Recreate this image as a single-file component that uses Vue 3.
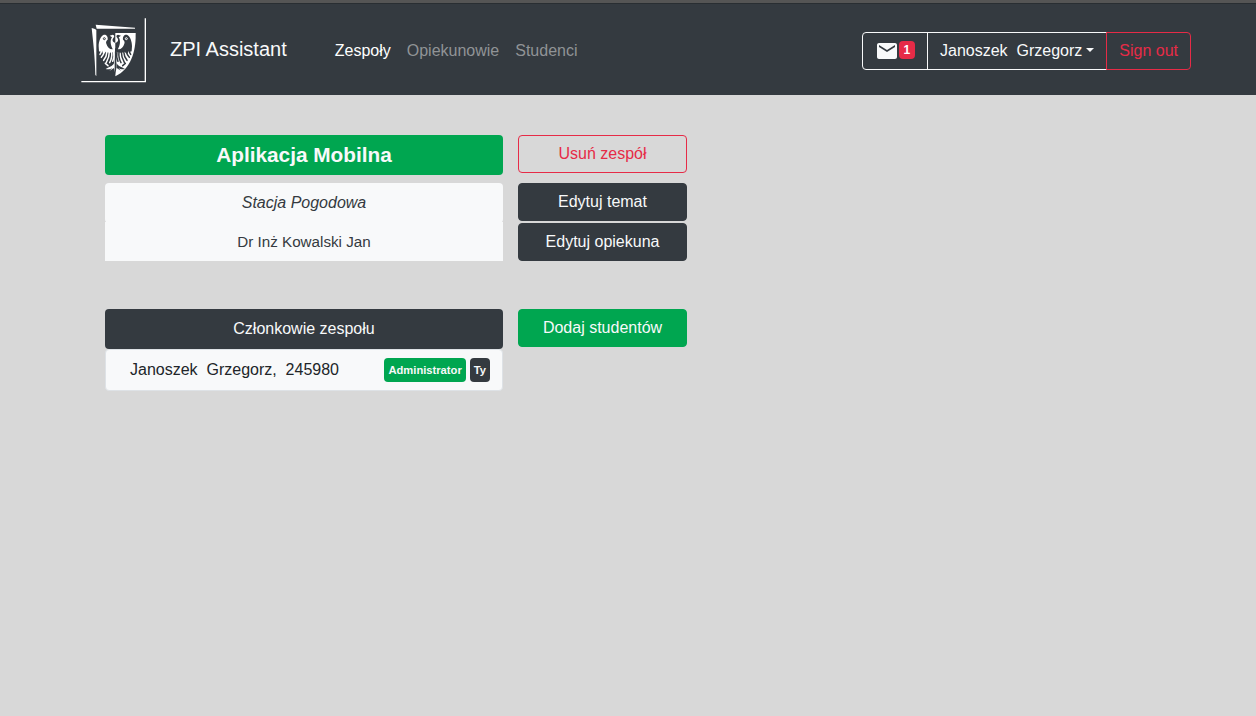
<script setup>
const links = [
  { label: 'Zespoły', active: true },
  { label: 'Opiekunowie', active: false },
  { label: 'Studenci', active: false },
]
const members = [{ last: 'Janoszek', first: 'Grzegorz', index: '245980', admin: true, self: true }]
</script>

<template>
  <div class="page">
    <header class="navbar">
      <svg class="logo" viewBox="33 51 198 198" aria-hidden="true">
        <defs>
          <g id="half-eagle">
            <path d="M100 102 C91 107 86 122 86 136 L87 151 C91 154 95 152 96 148 L99 158 C103 159 106 155 107 152 C117 158 127 155 137 151 L137 141 C125 149 113 143 109 128 C107 122 109 119 113 116 C115 106 107 99 100 102 Z" />
            <path d="M119 104 L128 101 C134 102 134 107 130 111 C126 116 127 123 136 126 L136 151 L129 146 C122 134 119 119 126 109 Z" />
            <path d="M133 150 L133 202 L137 226 L137 150 Z M132 187 C126 198 119 197 107 204 C115 206 122 204 127 201 L118 210 L132 201 Z" />
            <g fill="none" stroke="currentColor" stroke-width="4.5" stroke-linecap="round">
              <path d="M97 145 Q93 156 90 160 M104 148 Q101 162 94 169 M111 151 Q110 167 101 178 M118 152 Q118 169 109 184 M125 152 Q127 171 119 185 M131 151 Q134 168 128 181 M114 194 L106 187" />
            </g>
          </g>
        </defs>
        <path fill="#fff" d="M77 71 L195 80 L195 83 L80 83 Z M65 81 L75 84 L79 87 L79 225 L76 222 C75 167 69 119 65 81 Z" />
        <path fill="#fff" d="M136 96 H197 C198 155 181 204 136 226 Z" />
        <use href="#half-eagle" class="eagle-light" />
        <use href="#half-eagle" class="eagle-dark" transform="matrix(-1 0 0 1 272 0)" />
        <circle cx="103" cy="113" r="3" fill="none" stroke="#343a40" stroke-width="3" />
        <circle cx="169" cy="113" r="3" fill="none" stroke="#fff" stroke-width="3" />
        <path d="M34 242 H226 V52" fill="none" stroke="#fff" stroke-width="4" />
      </svg>
      <a class="brand">ZPI Assistant</a>
      <nav class="links">
        <a v-for="l in links" :key="l.label" :class="{ active: l.active }">{{ l.label }}</a>
      </nav>
      <div class="group">
        <button class="mail">
          <svg width="24" height="24" viewBox="0 0 24 24" fill="currentColor" aria-hidden="true"><path d="M20 4H4c-1.1 0-2 .9-2 2v12c0 1.100.9 2 2 2h16c1.100 0 2-.9 2-2V6c0-1.100-.9-2-2-2zm0 4-8 5-8-5V6l8 5 8-5z" /></svg>
          <span class="count">1</span>
        </button>
        <button class="user">Janoszek&nbsp; Grzegorz<span class="caret"></span></button>
        <button class="signout">Sign out</button>
      </div>
    </header>

    <main>
      <div class="row title-row">
        <h1 class="title">Aplikacja Mobilna</h1>
        <button class="action outline">Usuń zespół</button>
      </div>
      <div class="row">
        <div class="info topic">Stacja Pogodowa</div>
        <button class="action">Edytuj temat</button>
      </div>
      <div class="row mentor-row">
        <div class="info mentor">Dr Inż Kowalski Jan</div>
        <button class="action">Edytuj opiekuna</button>
      </div>
      <div class="row">
        <div class="members">
          <div class="members-head">Członkowie zespołu</div>
          <div v-for="m in members" :key="m.index" class="member">
            <span class="name">{{ m.last }}&nbsp; {{ m.first }},&nbsp; {{ m.index }}</span>
            <span v-if="m.admin" class="tag admin">Administrator</span>
            <span v-if="m.self" class="tag">Ty</span>
          </div>
        </div>
        <button class="action green">Dodaj studentów</button>
      </div>
    </main>
  </div>
</template>

<style>
body {
  background: #d8d8d8;
}
</style>

<style scoped>
* {
  box-sizing: border-box;
}
.page {
  min-height: 716px;
  background: #d8d8d8;
  font: 16px/24px "Liberation Sans", Arial, sans-serif;
  color: #212529;
}
.navbar {
  display: flex;
  align-items: center;
  height: 95px;
  padding: 4px 65px 0 81px;
  background: #343a40;
  border-top: 3px solid #555;
  box-shadow: inset 0 1px #292e32;
}
.logo {
  width: 66px;
  height: 66px;
  margin-right: 23px;
}
.eagle-light {
  fill: #fff;
  color: #fff;
}
.eagle-dark {
  fill: #343a40;
  color: #343a40;
}
.brand {
  font-size: 20px;
  line-height: 30px;
  color: #f8f9fa;
  margin: 0 40px 4px 0;
}
.links {
  display: flex;
}
.links a {
  padding: 8px;
  color: #909396;
}
.links a.active {
  color: #fff;
}
button {
  font: inherit;
  height: 38px;
  padding: 0 12px;
  border: 1px solid #f8f9fa;
  border-radius: 4px;
  background: transparent;
  color: #f8f9fa;
}
.group {
  display: flex;
  margin-left: auto;
}
.mail {
  display: flex;
  align-items: center;
  border-radius: 4px 0 0 4px;
}
.count {
  padding: 3px 4.800px;
  font-size: 12px;
  line-height: 12px;
  font-weight: 700;
  border-radius: 4px;
  background: #e62b47;
  color: #fff;
  margin-top: -3px;
}
.user {
  margin-left: -1px;
  border-radius: 0;
}
.caret {
  display: inline-block;
  margin-left: 4px;
  vertical-align: 4px;
  border: 4.800px solid transparent;
  border-top-color: currentColor;
  border-bottom: 0;
}
.signout {
  margin-left: -1px;
  color: #e62b47;
  border-color: #e62b47;
  border-radius: 0 4px 4px 0;
}
main {
  padding: 40px 105px;
}
.row {
  display: grid;
  grid-template-columns: 398px 169px;
  column-gap: 15px;
  align-items: start;
}
.title-row {
  margin-bottom: 8px;
}
.title {
  margin: 0;
  height: 40px;
  border-radius: 4px;
  background: #00a650;
  color: #f8f9fa;
  font-size: 20.800px;
  line-height: 40px;
  text-align: center;
}
.info {
  height: 40px;
  background: #f8f9fa;
  color: #343a40;
  text-align: center;
  line-height: 40px;
}
.topic {
  border-radius: 4px;
  font-style: italic;
}
.mentor {
  height: 39px;
  margin-top: -1px;
  font-size: 15.200px;
}
.mentor-row {
  margin-bottom: 48px;
}
.mentor-row {
  height: 38px;
}
.action {
  background: #343a40;
  border-color: #343a40;
}
.action.outline {
  background: transparent;
  border-color: #e62b47;
  color: #e62b47;
}
.action.green {
  background: #00a650;
  border-color: #00a650;
}
.members-head {
  height: 40px;
  border-radius: 4px;
  background: #343a40;
  color: #f8f9fa;
  text-align: center;
  line-height: 40px;
}
.member {
  display: flex;
  align-items: center;
  height: 42px;
  padding: 0 12px 0 24px;
  border: 1px solid #dee2e6;
  border-radius: 4px;
  background: #f8f9fa;
}
.name {
  flex: 1;
}
.tag {
  margin-left: 4px;
  padding: 0 4px;
  height: 24px;
  border-radius: 4px;
  background: #343a40;
  color: #f8f9fa;
  font-size: 11.200px;
  font-weight: 700;
}
.tag.admin {
  background: #00a650;
}
</style>
